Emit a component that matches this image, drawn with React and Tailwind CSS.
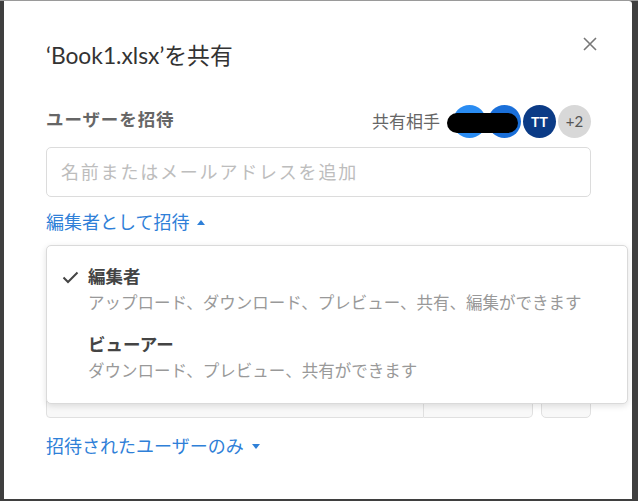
import React from "react";

const font = { fontFamily: "Lato, 'Noto Sans CJK JP', sans-serif" };

function Check() {
  return (
    <svg width="17" height="13" viewBox="0 0 17 13" fill="none">
      <path d="M1.5 6.5 L6 11 L15.5 1.5" stroke="#444" strokeWidth="2" />
    </svg>
  );
}

export default function App() {
  return (
    <div
      className="w-[638px] h-[501px] bg-[#3f3f3f] border-t border-[#9a9a9a] pl-[4px] pr-[6px] pb-[2px] flex"
      style={font}
    >
      <div className="relative flex-1 bg-white rounded-tr-[3px] pl-[42px] pr-[41px] pt-[40px] flex flex-col">
        <button className="absolute right-[35px] top-[36px] w-[14px] h-[14px]">
          <svg width="14" height="14" viewBox="0 0 14 14">
            <path d="M1 1 L13 13 M13 1 L1 13" stroke="#777" strokeWidth="1.6" />
          </svg>
        </button>
        <div className="text-[22.8px] leading-[28px] text-[#333]">‘Book1.xlsx’を共有</div>

        <div className="mt-[36px] h-[33px] flex items-center">
          <div className="text-[17.5px] font-bold text-[#666] mb-[3px] tracking-[0.9px]">ユーザーを招待</div>
          <div className="ml-auto flex items-center">
            <span className="text-[17px] text-[#666] mr-[13px]">共有相手</span>
            <div className="relative flex items-center gap-[2px]">
              <div className="w-[33px] h-[33px] rounded-full bg-[#2a8cf2]" />
              <div className="w-[33px] h-[33px] rounded-full bg-[#1a6fd9]" />
              <div className="w-[33px] h-[33px] rounded-full bg-[#0b3b86] text-white text-[14px] font-bold flex items-center justify-center">TT</div>
              <div className="w-[33px] h-[33px] rounded-full bg-[#d8d8d8] text-[#555] text-[15px] flex items-center justify-center">+2</div>
              <div className="absolute left-[-6px] top-[8px] w-[71px] h-[20px] rounded-full bg-black" />
            </div>
          </div>
        </div>

        <div className="mt-[9px] h-[50px] border border-[#dcdcdc] rounded-[5px] flex items-center pl-[14px] text-[18px] text-[#bdbdbd] tracking-[1.8px]">
          名前またはメールアドレスを追加
        </div>

        <div className="mt-[13px] h-[24px] flex items-center text-[18px] text-[#2f80d8]">
          編集者として招待
          <svg className="ml-[8px]" width="8" height="5" viewBox="0 0 8 5">
            <path d="M0 5 L4 0 L8 5 Z" fill="#2f80d8" />
          </svg>
        </div>

        <div className="mt-[135px] h-[49px] flex gap-0">
          <div className="w-[378px] border border-[#e0e0e0] rounded-l-[4px] bg-[#f8f8f8]" />
          <div className="w-[109px] border border-[#e0e0e0] border-l-0 rounded-r-[5px] bg-[#f8f8f8]" />
          <div className="ml-[8px] w-[50px] border border-[#e0e0e0] rounded-[5px] bg-[#f8f8f8]" />
        </div>

        <div className="mt-[16px] h-[24px] flex items-center text-[18px] text-[#2f80d8]">
          招待されたユーザーのみ
          <svg className="ml-[8px]" width="8" height="5" viewBox="0 0 8 5">
            <path d="M0 0 L4 5 L8 0 Z" fill="#2f80d8" />
          </svg>
        </div>

        <div className="absolute left-[42px] top-[244px] w-[582px] h-[159px] bg-white border border-[#dadada] rounded-[5px] shadow-[0_2px_6px_rgba(0,0,0,0.12)] pt-[10px]">
          <div className="relative py-[8px] pl-[41px]">
            <div className="absolute left-[15px] top-[15px]">
              <Check />
            </div>
            <div className="h-[26px] leading-[26px] text-[17.5px] font-bold text-[#444]">編集者</div>
            <div className="h-[26px] leading-[26px] text-[16.5px] text-[#999]">アップロード、ダウンロード、プレビュー、共有、編集ができます</div>
          </div>
          <div className="relative py-[8px] pl-[41px]">
            <div className="h-[26px] leading-[26px] text-[17.5px] font-bold text-[#444]">ビューアー</div>
            <div className="h-[26px] leading-[26px] text-[16.5px] text-[#999]">ダウンロード、プレビュー、共有ができます</div>
          </div>
        </div>
      </div>
    </div>
  );
}
